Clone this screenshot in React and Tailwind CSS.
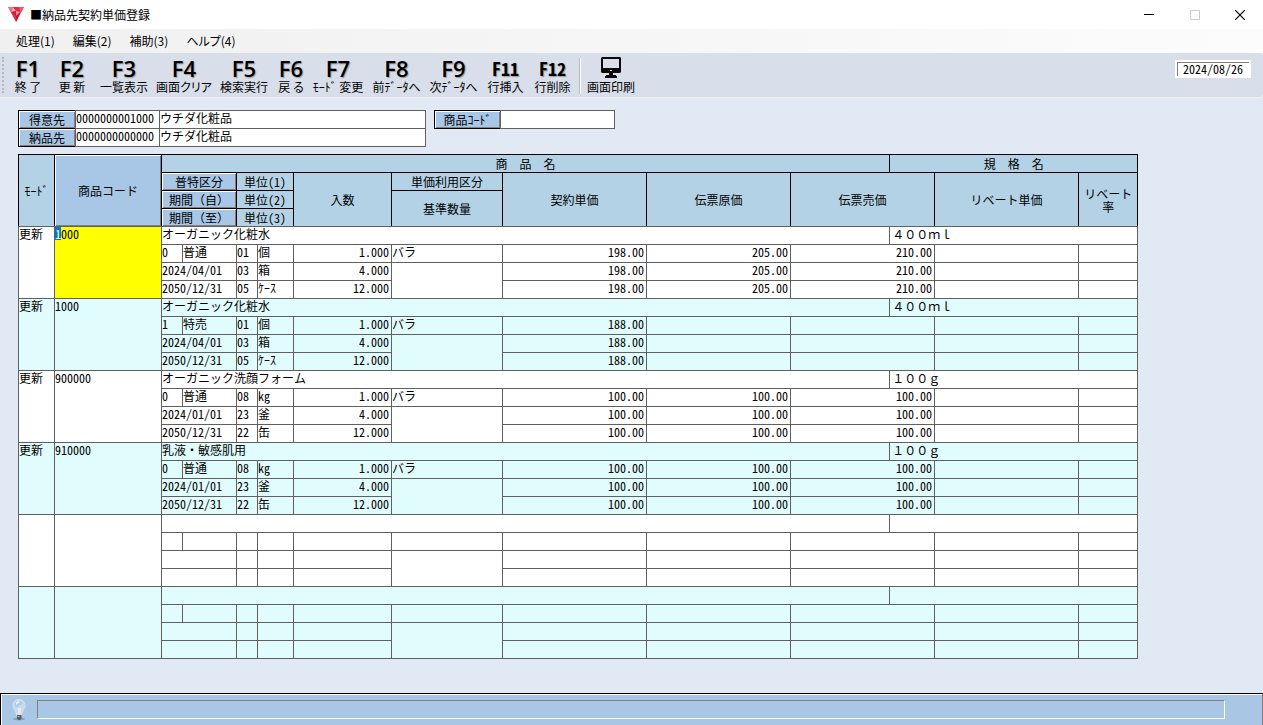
import { useEffect, useRef } from "react";

const functionKeys = [
    { key: "F1", label: "終 了", width: "w-[44px]" },
    { key: "F2", label: "更 新", width: "w-[44px]" },
    { key: "F3", label: "一覧表示", width: "w-[60px]" },
    { key: "F4", label: "画面クリア", width: "w-[60px]" },
    { key: "F5", label: "検索実行", width: "w-[60px]" },
    { key: "F6", label: "戻 る", width: "w-[34px]" },
    { key: "F7", label: "ﾓｰﾄﾞ 変更", width: "w-[60px]" },
    { key: "F8", label: "前ﾃﾞｰﾀへ", width: "w-[57px]" },
    { key: "F9", label: "次ﾃﾞｰﾀへ", width: "w-[57px]" },
    { key: "F11", label: "行挿入", width: "w-[47px]" },
    { key: "F12", label: "行削除", width: "w-[47px]" },
];

const columnWidths = [36, 107, 21, 54, 21, 36, 98, 111, 144, 144, 99, 45, 144, 59];

const cosmeUnits = [["01", "個"], ["03", "箱"], ["05", "ｹｰｽ"]];
const foamUnits = [["08", "kg"], ["23", "釜"], ["22", "缶"]];

const records = [
    {
        mode: "更新", code: "1000", name: "オーガニック化粧水", spec: "４００ｍｌ",
        kind: ["0", "普通"], from: "2024/04/01", to: "2050/12/31", units: cosmeUnits,
        counts: ["1.000", "4.000", "12.000"], usage: "バラ",
        contract: "198.00", cost: "205.00", price: "210.00",
    },
    {
        mode: "更新", code: "1000", name: "オーガニック化粧水", spec: "４００ｍｌ",
        kind: ["1", "特売"], from: "2024/04/01", to: "2050/12/31", units: cosmeUnits,
        counts: ["1.000", "4.000", "12.000"], usage: "バラ",
        contract: "188.00", cost: "", price: "",
    },
    {
        mode: "更新", code: "900000", name: "オーガニック洗顔フォーム", spec: "１００ｇ",
        kind: ["0", "普通"], from: "2024/01/01", to: "2050/12/31", units: foamUnits,
        counts: ["1.000", "4.000", "12.000"], usage: "バラ",
        contract: "100.00", cost: "100.00", price: "100.00",
    },
    {
        mode: "更新", code: "910000", name: "乳液・敏感肌用", spec: "１００ｇ",
        kind: ["0", "普通"], from: "2024/01/01", to: "2050/12/31", units: foamUnits,
        counts: ["1.000", "4.000", "12.000"], usage: "バラ",
        contract: "100.00", cost: "100.00", price: "100.00",
    },
    {},
    {},
];

const Logo = () => (
    <svg width="16" height="15" viewBox="0 0 16 15" aria-hidden="true">
        <path d="M0 0h16L8 15z" fill="#dc2f4a" />
        <path d="M0 0h5L3.500 5z" fill="#ef7284" />
        <path d="M5 0l3 4-4.500 1z" fill="#f7a9b3" />
        <path d="M5 0h6L8 4z" fill="#d9304a" />
        <path d="M11 0h5l-3.500 5z" fill="#e85a6e" />
        <path d="M8 4l4.500 1L8 9z" fill="#f28b9a" />
        <path d="M3.500 5L8 4v5z" fill="#d11d3a" />
        <path d="M8 9l4.500-4L8 15z" fill="#c4122f" />
    </svg>
);

const MonitorIcon = () => (
    <svg width="22" height="22" viewBox="0 0 22 22" aria-hidden="true">
        <path fillRule="evenodd" d="M2 0h18l1 1v14l-1 1H2l-1-1V1zM3 2v9h16V2z" fill="#0a0a0a" />
        <path d="M10 13h2v1h-2z" fill="#fff" />
        <path d="M9 16h4v2h3v1h1v2H5v-2h1v-1h3z" fill="#0a0a0a" />
    </svg>
);

const BulbIcon = () => (
    <svg width="14" height="22" viewBox="0 0 14 22" aria-hidden="true">
        <ellipse cx="7" cy="20" rx="6" ry="1.500" fill="#6f8daa" opacity="0.6" />
        <path d="M7 .5C3 .5 1 3.500 1 6.500c0 3 3 5 3.500 9.500h5C10 11.500 13 9.500 13 6.500 13 3.500 11 .5 7 .5z" fill="#c9d9e8" stroke="#dbe5ee" />
        <path d="M6.500 2C4 2 2.500 4 2.500 6.500L5 8l6-4C10 2.500 8.500 2 6.500 2z" fill="#a9cdef" />
        <path d="M4 3.500C5 2 7 2 8 2.500L4 6z" fill="#e9f3fb" />
        <path d="M5.500 9l1 7h1.500l1.500-7z" fill="#e6edf4" />
        <path d="M5 16h4.500v3.500L8 21H6.500L5 19.500z" fill="#5d5d60" />
        <path d="M5.500 17h2v1h-2z" fill="#bbb" />
    </svg>
);

const FieldButton = ({ children, className }) => (
    <button
        type="button"
        className={`h-[19px] shrink-0 border border-black bg-[#a8c6e6] leading-[16px] shadow-[inset_1px_1px_0_#fff,inset_-1px_-1px_0_#808080] ${className}`}
    >
        {children}
    </button>
);

const Field = ({ label, value, className }) => (
    <input
        aria-label={label}
        defaultValue={value}
        className={`-ml-px h-[19px] border border-[#606060] bg-white pb-[4px] leading-[13px] outline-none ${className}`}
    />
);

const Head = ({ children, last, raised, ...rest }) => (
    <th
        {...rest}
        className={`border border-black p-0 text-center align-middle font-normal leading-[14px] ${last ? "border-b-[#606060]" : ""} ${raised ? "bg-[#a8c6e6] shadow-[inset_1px_1px_0_#fff,inset_-1px_-1px_0_#808080]" : ""}`}
    >
        {children}
    </th>
);

const Cell = ({ children, right, className, ...rest }) => (
    <td
        {...rest}
        className={`overflow-hidden whitespace-nowrap border border-[#606060] p-0 align-top leading-[13px] ${right ? "pr-[2px] text-right" : ""} ${className || ""}`}
    >
        {children}
    </td>
);

const RecordRows = ({ record, index }) => {
    const codeRef = useRef(null);
    const {
        mode, code, name, spec, kind = [], from, to,
        units = [[], [], []], counts = [], usage, contract, cost, price,
    } = record;

    useEffect(() => {
        if (index === 0) {
            codeRef.current.focus();
            codeRef.current.setSelectionRange(0, 1);
        }
    }, [index]);

    const amounts = (
        <>
            <Cell right>{contract}</Cell>
            <Cell right>{cost}</Cell>
            <Cell right colSpan={2}>{price}</Cell>
            <Cell />
            <Cell />
        </>
    );

    return (
        <tbody className={index % 2 ? "bg-[#e0fcfd]" : "bg-white"}>
            <tr className="h-[18px]">
                <Cell rowSpan={4}>{mode}</Cell>
                <Cell rowSpan={4} className={index === 0 ? "bg-[#ffff00]" : ""}>
                    {code && (
                        <input
                            ref={codeRef}
                            aria-label={`商品コード ${index + 1}`}
                            defaultValue={code}
                            className="block h-[13px] w-full bg-transparent leading-[13px] outline-none selection:bg-[#0078d7] selection:text-white"
                        />
                    )}
                </Cell>
                <Cell colSpan={9}>{name}</Cell>
                <Cell colSpan={3} className="pl-[2px]">{spec}</Cell>
            </tr>
            <tr className="h-[18px]">
                <Cell>{kind[0]}</Cell>
                <Cell>{kind[1]}</Cell>
                <Cell>{units[0][0]}</Cell>
                <Cell>{units[0][1]}</Cell>
                <Cell right>{counts[0]}</Cell>
                <Cell>{usage}</Cell>
                {amounts}
            </tr>
            <tr className="h-[18px]">
                <Cell colSpan={2}>{from}</Cell>
                <Cell>{units[1][0]}</Cell>
                <Cell>{units[1][1]}</Cell>
                <Cell right>{counts[1]}</Cell>
                <Cell rowSpan={2} />
                {amounts}
            </tr>
            <tr className="h-[18px]">
                <Cell colSpan={2}>{to}</Cell>
                <Cell>{units[2][0]}</Cell>
                <Cell>{units[2][1]}</Cell>
                <Cell right>{counts[2]}</Cell>
                {amounts}
            </tr>
        </tbody>
    );
};

const PriceTable = () => (
    <table className="w-[1120px] table-fixed border-collapse">
        <colgroup>
            {columnWidths.map((width, index) => (
                <col key={index} style={{ width }} />
            ))}
        </colgroup>
        <thead className="bg-[#b3d2e5]">
            <tr className="h-[18px]">
                <Head rowSpan={4} last>ﾓｰﾄﾞ</Head>
                <Head rowSpan={4} last raised>商品コード</Head>
                <Head colSpan={9}>商　品　名</Head>
                <Head colSpan={3}>規　格　名</Head>
            </tr>
            <tr className="h-[18px]">
                <Head colSpan={2} raised>普特区分</Head>
                <Head colSpan={2}>単位(1)</Head>
                <Head rowSpan={3} last>入数</Head>
                <Head>単価利用区分</Head>
                <Head rowSpan={3} last>契約単価</Head>
                <Head rowSpan={3} last>伝票原価</Head>
                <Head rowSpan={3} last colSpan={2}>伝票売価</Head>
                <Head rowSpan={3} last>リベート単価</Head>
                <Head rowSpan={3} last>
                    <span className="block leading-[13px]">リベート<br />率</span>
                </Head>
            </tr>
            <tr className="h-[18px]">
                <Head colSpan={2} raised>期間（自）</Head>
                <Head colSpan={2}>単位(2)</Head>
                <Head rowSpan={2} last>基準数量</Head>
            </tr>
            <tr className="h-[18px]">
                <Head colSpan={2} last raised>期間（至）</Head>
                <Head colSpan={2} last>単位(3)</Head>
            </tr>
        </thead>
        {records.map((record, index) => (
            <RecordRows key={index} record={record} index={index} />
        ))}
    </table>
);

const App = () => {
    return (
        <div className="flex min-h-screen flex-col bg-[#e1eaf4] font-['Noto_Sans_Mono_CJK_JP','Noto_Sans_CJK_JP',monospace] text-[12px] text-black">
            {/* Title bar */}
            <header className="flex h-[29px] items-center bg-white pl-2 font-['Noto_Sans_CJK_JP',sans-serif]">
                <Logo />
                <h1 className="ml-[6px] flex-1 leading-[18px]">■納品先契約単価登録</h1>
                <div className="flex">
                    <button type="button" aria-label="最小化" className="grid h-[26px] w-[46px] place-items-center">
                        <svg width="10" height="10" aria-hidden="true"><path d="M0 4.500h10" stroke="#000" /></svg>
                    </button>
                    <button type="button" aria-label="最大化" disabled className="grid h-[26px] w-[45px] place-items-center">
                        <svg width="10" height="10" aria-hidden="true"><path d="M.5.5h9v9h-9z" fill="none" stroke="#ccc" /></svg>
                    </button>
                    <button type="button" aria-label="閉じる" className="grid h-[26px] w-[46px] place-items-center">
                        <svg width="10" height="10" aria-hidden="true"><path d="M0 0l10 10M10 0L0 10" stroke="#000" strokeWidth="1.2" /></svg>
                    </button>
                </div>
            </header>

            {/* Menu */}
            <nav className="flex h-[24px] items-center gap-[18px] bg-linear-to-r from-[#f0f0f0] to-[#fcfcfc] pl-4 font-['Noto_Sans_CJK_JP',sans-serif] leading-[18px] [font-feature-settings:'palt']">
                <a href="#process">処理(1)</a>
                <a href="#edit">編集(2)</a>
                <a href="#assist">補助(3)</a>
                <a href="#help">ヘルプ(4)</a>
            </nav>

            {/* Function keys */}
            <div className="flex h-[45px] items-start rounded-r-sm border-b border-[#f0f0f0] bg-[#d8dfea] font-['Noto_Sans_CJK_JP',sans-serif]">
                <div className="mt-1 mr-[1px] ml-[2px] h-[36px] w-[3px] border-l-2 border-dotted border-[#b4b8c0]" />
                {functionKeys.map(({ key, label, width }) => (
                    <button key={key} type="button" className={`${width} flex shrink-0 flex-col items-center whitespace-nowrap pt-[5px]`}>
                        <span
                            className={`leading-[21px] [text-shadow:1px_1px_1px_#999] ${key.length > 2 ? "font-['Noto_Sans_Mono_CJK_JP',monospace] text-[18px] font-bold" : "font-['Open_Sans',sans-serif] text-[22px] font-semibold"}`}
                        >
                            {key}
                        </span>
                        <span className="leading-[16px] [font-feature-settings:'palt']">{label}</span>
                    </button>
                ))}
                <div className="mx-[3px] mt-[5px] h-[36px] w-[2px] border-l border-[#b4b8c0] bg-white" />
                <button type="button" className="flex w-[54px] shrink-0 flex-col items-center pt-[4px]">
                    <MonitorIcon />
                    <span className="leading-[16px]">画面印刷</span>
                </button>
                <time className="mt-[7px] mr-3 ml-auto border-2 border-white bg-white px-[6px] font-['Noto_Sans_Mono_CJK_JP',monospace] leading-[14px] shadow-[inset_1px_1px_0_#808080]">
                    2024/08/26
                </time>
            </div>

            <main className="flex-1 overflow-x-auto px-[18px] pt-3 pb-[34px]">
                {/* Search conditions */}
                <div className="mb-[7px] flex items-start gap-2">
                    <div>
                        <div className="flex">
                            <FieldButton className="w-[58px]">得意先</FieldButton>
                            <Field label="得意先コード" value="0000000001000" className="w-[85px]" />
                            <Field label="得意先名" value="ウチダ化粧品" className="w-[267px]" />
                        </div>
                        <div className="-mt-px flex">
                            <FieldButton className="w-[58px]">納品先</FieldButton>
                            <Field label="納品先コード" value="0000000000000" className="w-[85px]" />
                            <Field label="納品先名" value="ウチダ化粧品" className="w-[267px]" />
                        </div>
                    </div>
                    <div className="flex">
                        <FieldButton className="w-[67px]">商品ｺｰﾄﾞ</FieldButton>
                        <Field label="商品コード" value="" className="w-[115px]" />
                    </div>
                </div>

                <PriceTable />
            </main>

            {/* Status bar */}
            <footer className="flex h-8 items-center border-t border-r border-l border-t-black border-r-[#808080] border-l-black bg-[#a9c6e4] pr-[37px] pl-[11px] shadow-[inset_1px_1px_0_#fff]">
                <BulbIcon />
                <output className="ml-[11px] h-[19px] flex-1 border border-t-[#808080] border-r-white border-b-white border-l-[#808080]" />
            </footer>
        </div>
    );
};

export default App;
